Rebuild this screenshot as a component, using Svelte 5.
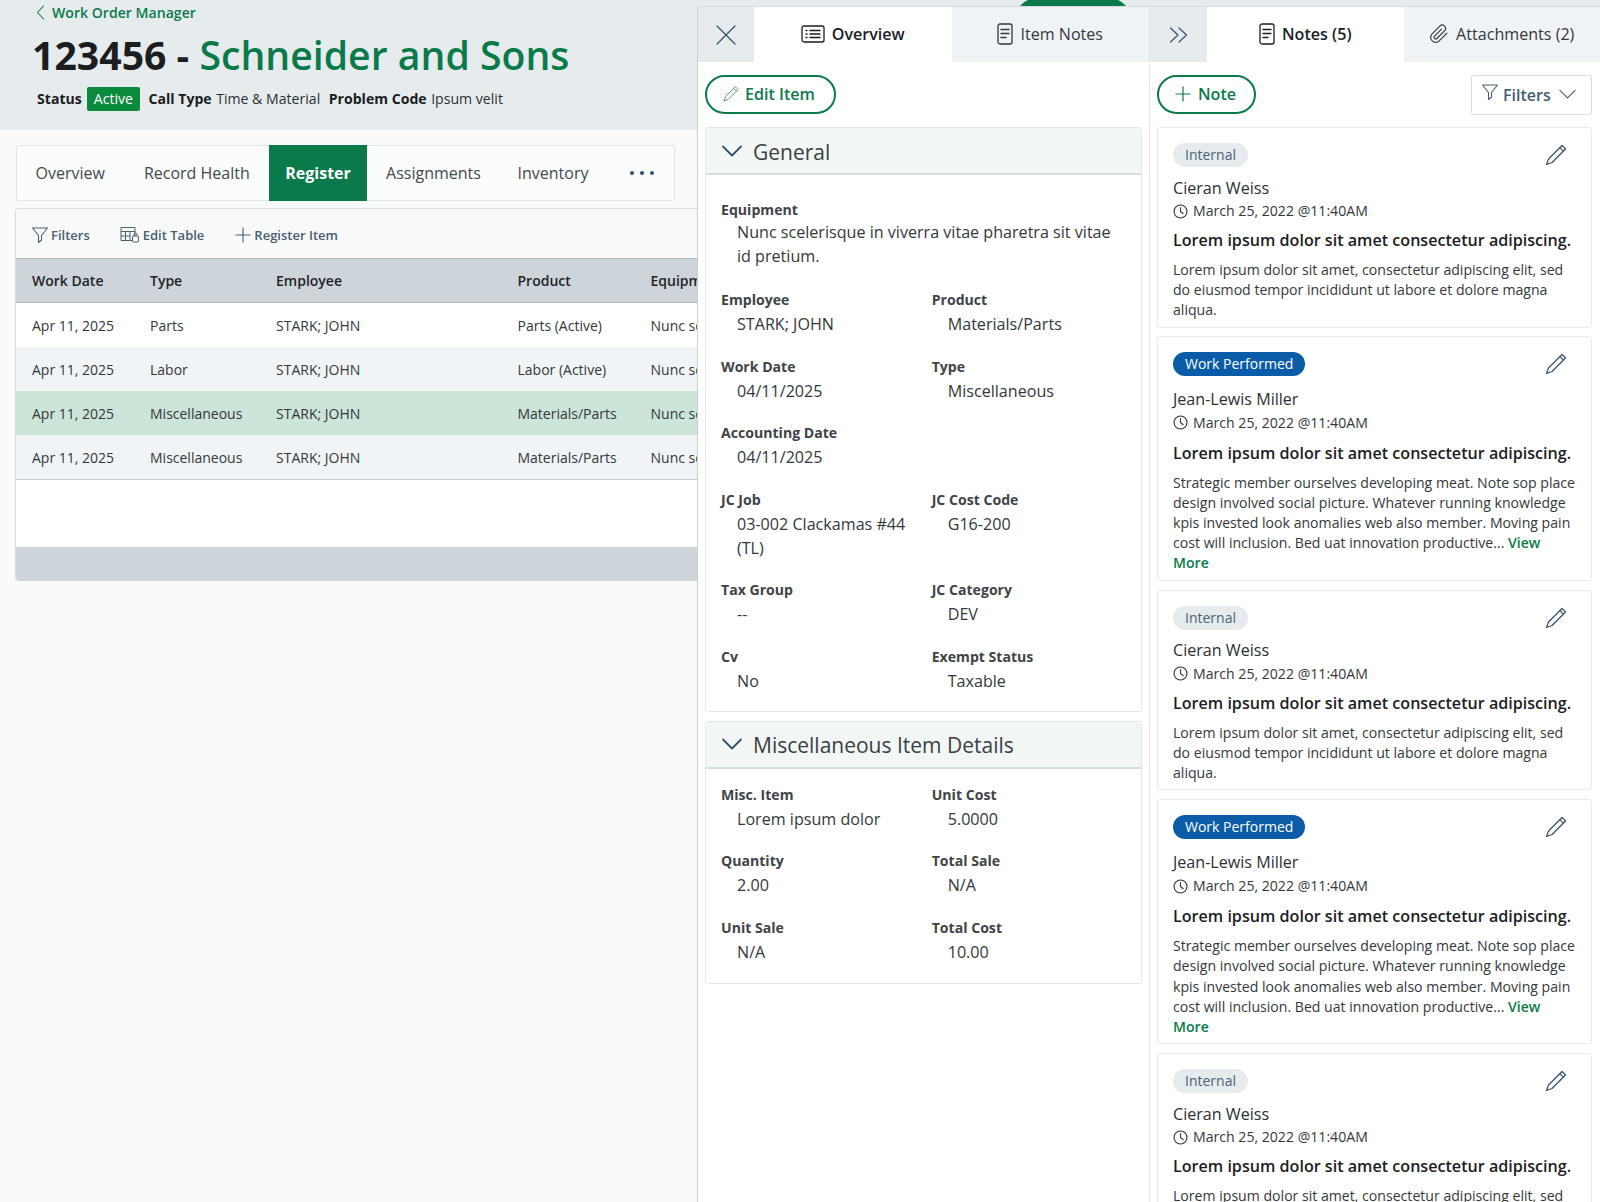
<script>
  const rows = [
    { date: 'Apr 11, 2025', type: 'Parts', product: 'Parts (Active)', tone: '' },
    { date: 'Apr 11, 2025', type: 'Labor', product: 'Labor (Active)', tone: 'alt' },
    { date: 'Apr 11, 2025', type: 'Miscellaneous', product: 'Materials/Parts', tone: 'picked' },
    { date: 'Apr 11, 2025', type: 'Miscellaneous', product: 'Materials/Parts', tone: 'alt' }
  ];

  const general = [
    { label: 'Employee', value: 'STARK; JOHN' },
    { label: 'Product', value: 'Materials/Parts' },
    { label: 'Work Date', value: '04/11/2025' },
    { label: 'Type', value: 'Miscellaneous' },
    { label: 'Accounting Date', value: '04/11/2025' },
    { label: '', value: '' },
    { label: 'JC Job', value: '03-002 Clackamas #44 (TL)' },
    { label: 'JC Cost Code', value: 'G16-200' },
    { label: 'Tax Group', value: '--' },
    { label: 'JC Category', value: 'DEV' },
    { label: 'Cv', value: 'No' },
    { label: 'Exempt Status', value: 'Taxable' }
  ];

  const misc = [
    { label: 'Misc. Item', value: 'Lorem ipsum dolor' },
    { label: 'Unit Cost', value: '5.0000' },
    { label: 'Quantity', value: '2.00' },
    { label: 'Total Sale', value: 'N/A' },
    { label: 'Unit Sale', value: 'N/A' },
    { label: 'Total Cost', value: '10.00' }
  ];

  const shortBody = 'Lorem ipsum dolor sit amet, consectetur adipiscing elit, sed do eiusmod tempor incididunt ut labore et dolore magna aliqua.';
  const longBody = 'Strategic member ourselves developing meat. Note sop place design involved social picture. Whatever running knowledge kpis invested look anomalies web also member. Moving pain cost will inclusion. Bed uat innovation productive...';

  const notes = [
    { kind: 'internal', chip: 'Internal', who: 'Cieran Weiss', body: shortBody },
    { kind: 'performed', chip: 'Work Performed', who: 'Jean-Lewis Miller', body: longBody },
    { kind: 'internal', chip: 'Internal', who: 'Cieran Weiss', body: shortBody },
    { kind: 'performed', chip: 'Work Performed', who: 'Jean-Lewis Miller', body: longBody },
    { kind: 'internal', chip: 'Internal', who: 'Cieran Weiss', body: shortBody }
  ];
</script>

{#snippet pencil(size)}
  <svg width={size} height={size} viewBox="0 0 24 24" fill="none" stroke="currentColor" stroke-width="1.2" stroke-linejoin="round" stroke-linecap="round">
    <path d="M18 2.500 21.500 6 8 19.500 2.500 21.500 4.500 16Z" />
    <path d="M15.800 4.700 19.300 8.200" />
  </svg>
{/snippet}

{#snippet doc()}
  <svg width="16" height="22" viewBox="0 0 16 22" fill="none" stroke="currentColor" stroke-width="1.3" stroke-linecap="round">
    <rect x="1" y="1" width="14" height="20" rx="2" />
    <path d="M4 6.500h8M4 10.500h8M4 14.500h5" />
  </svg>
{/snippet}

{#snippet funnel(size)}
  <svg width={size} height={size} viewBox="0 0 18 18" fill="none" stroke="currentColor" stroke-width="1.1" stroke-linejoin="round">
    <path d="M1.500 2h15l-6 7.500V14l-3 2.500V9.500Z" />
  </svg>
{/snippet}

{#snippet chevron(w, sw)}
  <svg width={w} height={w * 0.6} viewBox="0 0 20 12" fill="none" stroke="currentColor" stroke-width={sw} stroke-linecap="round" stroke-linejoin="round">
    <path d="M1 1.500 10 10.500 19 1.500" />
  </svg>
{/snippet}

{#snippet fields(items)}
  <div class="fields">
    {#each items as f}
      <div class="field">
        {#if f.label}
          <div class="f-label">{f.label}</div>
          <div class="f-value">{f.value}</div>
        {/if}
      </div>
    {/each}
  </div>
{/snippet}

<div class="page">
  <header class="head">
    <a class="crumb" href="#top">
      <svg width="9" height="15" viewBox="0 0 9 15" fill="none" stroke="currentColor" stroke-width="1.1" stroke-linecap="round" stroke-linejoin="round"><path d="M7.500 1 1.500 7.500 7.500 14" /></svg>
      Work Order Manager
    </a>
    <h1><span class="num">123456 -</span> <span class="name">Schneider and Sons</span></h1>
    <div class="meta">
      <b>Status</b><span class="active">Active</span>
      <b class="ml">Call Type</b><span>Time &amp; Material</span>
      <b class="ml">Problem Code</b><span>Ipsum velit</span>
    </div>
  </header>

  <div class="main">
    <nav class="tabs">
      <span class="tab">Overview</span>
      <span class="tab">Record Health</span>
      <span class="tab on">Register</span>
      <span class="tab">Assignments</span>
      <span class="tab">Inventory</span>
      <span class="dots"><i></i><i></i><i></i></span>
    </nav>

    <section class="grid-card">
      <div class="toolbar">
        <span class="tool first">{@render funnel(18)} Filters</span>
        <span class="tool">
          <svg width="20" height="17" viewBox="0 0 20 17" fill="none" stroke="currentColor" stroke-width="1"><path d="M1 1.500h14v13H1ZM1 5.500h14M1 10h9M5.500 5.500v9M10 5.500V14.500" /><rect x="12.500" y="10" width="6" height="6" rx="1" fill="#f8fafa" /><path d="M14 10V8.500a1.500 1.500 0 0 1 3 0V10" /></svg>
          Edit Table
        </span>
        <span class="tool last">
          <svg width="16" height="16" viewBox="0 0 16 16" fill="none" stroke="currentColor" stroke-width="1.1"><path d="M8 .5v15M.5 8h15" /></svg>
          Register Item
        </span>
      </div>
      <table>
        <colgroup><col class="c1" /><col class="c2" /><col class="c3" /><col class="c4" /><col class="c5" /></colgroup>
        <thead>
          <tr><th>Work Date</th><th>Type</th><th>Employee</th><th>Product</th><th>Equipment</th></tr>
        </thead>
        <tbody>
          {#each rows as r}
            <tr class={r.tone}>
              <td>{r.date}</td><td>{r.type}</td><td>STARK; JOHN</td><td>{r.product}</td><td>Nunc scelerisque</td>
            </tr>
          {/each}
        </tbody>
      </table>
      <div class="empty"></div>
      <div class="foot"></div>
    </section>
  </div>

  <div class="pill"></div>

  <aside class="panel">
    <div class="pane left">
      <div class="pane-tabs">
        <span class="icon-tab">
          <svg width="20" height="20" viewBox="0 0 20 20" fill="none" stroke="currentColor" stroke-width="1.2" stroke-linecap="round"><path d="M1 1l18 18M19 1 1 19" /></svg>
        </span>
        <span class="ptab on">
          <svg width="24" height="18" viewBox="0 0 24 18" fill="none" stroke="currentColor" stroke-width="1.3" stroke-linecap="round"><rect x="1" y="1" width="22" height="16" rx="2" /><path d="M5 5.500h1M5 9h1M5 12.500h1M9 5.500h10M9 9h10M9 12.500h10" /></svg>
          Overview
        </span>
        <span class="ptab">{@render doc()} Item Notes</span>
      </div>
      <div class="pane-body">
        <div class="bar">
          <button class="pill-btn edit">{@render pencil(18)} Edit Item</button>
        </div>
        <section class="sec">
          <h2>{@render chevron(20, 1.8)} <span>General</span></h2>
          <div class="sec-body gen">
            <div class="field wide">
              <div class="f-label">Equipment</div>
              <div class="f-value">Nunc scelerisque in viverra vitae pharetra sit vitae id pretium.</div>
            </div>
            {@render fields(general)}
          </div>
        </section>
        <section class="sec">
          <h2>{@render chevron(20, 1.8)} <span>Miscellaneous Item Details</span></h2>
          <div class="sec-body">
            {@render fields(misc)}
          </div>
        </section>
      </div>
    </div>

    <div class="pane right">
      <div class="pane-tabs">
        <span class="icon-tab">
          <svg width="20" height="16" viewBox="0 0 20 16" fill="none" stroke="currentColor" stroke-width="1.2" stroke-linecap="round" stroke-linejoin="round"><path d="M1.500 1 9 8l-7.500 7M10 1l7.500 7-7.500 7" /></svg>
        </span>
        <span class="ptab on">{@render doc()} Notes (5)</span>
        <span class="ptab">
          <svg width="20" height="20" viewBox="0 0 24 24" fill="none" stroke="currentColor" stroke-width="1.4" stroke-linecap="round" stroke-linejoin="round"><path d="M21.440 11.050l-9.190 9.190a6 6 0 0 1-8.490-8.490l9.190-9.190a4 4 0 0 1 5.660 5.660l-9.200 9.190a2 2 0 0 1-2.830-2.830l8.490-8.480" /></svg>
          Attachments (2)
        </span>
      </div>
      <div class="pane-body">
        <div class="bar split">
          <button class="pill-btn add">
            <svg width="16" height="16" viewBox="0 0 16 16" fill="none" stroke="currentColor" stroke-width="1.2"><path d="M8 .5v15M.5 8h15" /></svg>
            Note
          </button>
          <button class="filter"><span class="f-ico">{@render funnel(18)}</span> Filters {@render chevron(17, 1.3)}</button>
        </div>
        {#each notes as n}
          <article class="note {n.kind}">
            <div class="note-top">
              <span class="chip">{n.chip}</span>
              <span class="note-edit">{@render pencil(24)}</span>
            </div>
            <div class="who">{n.who}</div>
            <div class="when">
              <svg width="15" height="15" viewBox="0 0 16 16" fill="none" stroke="currentColor" stroke-width="1.2" stroke-linecap="round" stroke-linejoin="round"><circle cx="8" cy="8" r="6.900" /><path d="M8 3.800V8l2.800 2.400" /></svg>
              March 25, 2022 @11:40AM
            </div>
            <div class="subject">Lorem ipsum dolor sit amet consectetur adipiscing.</div>
            <p>{n.body}{' '}{#if n.kind === 'performed'}<a href="#top">View More</a>{/if}</p>
          </article>
        {/each}
      </div>
    </div>
  </aside>
</div>

<style>
  :global(body) {
    margin: 0;
    background: #f9fbfb;
    font-family: "Open Sans", "Noto Sans", sans-serif;
    color: #2b3033;
  }

  .page {
    position: relative;
    height: 1202px;
    overflow: hidden;
  }

  .head {
    height: 130px;
    box-sizing: border-box;
    background: #e6ebee;
    padding: 2px 0 0 32px;
  }

  .crumb {
    display: flex;
    align-items: center;
    gap: 7px;
    height: 20px;
    margin-left: 4px;
    font-size: 14.1px;
    font-weight: 600;
    color: #0b7a4b;
    text-decoration: none;
  }

  h1 {
    margin: 9px 0 0 0;
    font-size: 39.200px;
    line-height: 48px;
    font-weight: 600;
    color: #0b7a4b;
  }

  .num {
    font-weight: 700;
    color: #1b1d1f;
  }

  .meta {
    display: flex;
    align-items: center;
    gap: 4.500px;
    margin: 8px 0 0 5px;
    font-size: 14.1px;
    line-height: 24px;
    color: #2b3033;
  }

  .meta b {
    font-weight: 700;
    color: #1b1d1f;
  }

  .meta .ml {
    margin-left: 4px;
  }

  .active {
    background: #0a8a3c;
    color: #fff;
    border-radius: 2px;
    padding: 0 7px;
    margin-left: .5px;
  }

  .main {
    padding: 15px 0 0 16px;
  }

  .tabs {
    display: flex;
    align-items: center;
    width: 659px;
    height: 56px;
    box-sizing: border-box;
    background: #fbfcfc;
    border: 1px solid #dfe5e8;
    border-radius: 3px;
    font-size: 16px;
    color: #44494d;
  }

  .tab {
    height: 56px;
    display: flex;
    align-items: center;
    padding: 0 18.500px;
    margin-right: 1px;
  }

  .tab:first-child {
    margin-right: 2px;
  }

  .tab.on {
    background: #0b7a4b;
    color: #fff;
    font-weight: 700;
    padding: 0 16px;
    margin-right: 1px;
  }

  .on ~ .tab {
    padding: 0 18.300px;
    margin-right: 0;
  }

  .dots {
    display: flex;
    gap: 6px;
    margin-left: 23px;
  }

  .dots i {
    width: 4px;
    height: 4px;
    border-radius: 50%;
    background: #33506a;
  }

  .grid-card {
    margin: 7px 0 0 -1px;
    width: 800px;
    border-radius: 4px;
    overflow: hidden;
    border: 1px solid #d6dee2;
    border-width: 1px 0 0 1px;
  }

  .toolbar {
    display: flex;
    align-items: center;
    height: 50px;
    box-sizing: border-box;
    padding: 2px 0 0 15px;
    gap: 30px;
    background: #f8fafa;
    font-size: 13px;
    font-weight: 600;
    color: #46606f;
    border-bottom: 1px solid #aab7c0;
  }

  .tool {
    display: flex;
    align-items: center;
    gap: 3px;
  }

  .tool.first {
    gap: 2px;
  }

  .tool.last {
    margin-left: 1px;
  }

  table {
    width: 100%;
    table-layout: fixed;
    border-collapse: collapse;
    font-size: 14px;
    background: #fff;
  }

  .c1 { width: 118px; }
  .c2 { width: 126px; }
  .c3 { width: 241.500px; }
  .c4 { width: 133px; }

  th {
    height: 43px;
    padding: 0 0 0 16px;
    text-align: left;
    font-weight: 600;
    background: #cdd5db;
    color: #1f2427;
    border-bottom: 1px solid #aab7c0;
  }

  td {
    height: 44px;
    padding: 0 0 0 16px;
    color: #33383b;
    white-space: nowrap;
  }

  tr.alt td { background: #f1f4f6; }
  tr.picked td { background: #cce5d9; }
  tbody tr:last-child td { border-bottom: 1px solid #c3ccd2; }

  .empty {
    height: 67px;
    background: #fff;
  }

  .foot {
    height: 34px;
    background: #cdd5db;
  }

  .pill {
    position: absolute;
    top: -2px;
    left: 1015px;
    width: 116px;
    height: 44px;
    border-radius: 22px;
    background: #0b7a4b;
  }

  .panel {
    position: absolute;
    top: 6px;
    left: 697px;
    right: 0;
    bottom: 0;
    display: flex;
    background: #fff;
    border-left: 1px solid #c6d2d8;
    border-top: 1px solid #d6dee2;
  }

  .pane.left {
    width: 451px;
    border-right: 1px solid #e3e8eb;
  }

  .pane.right {
    flex: 1;
    min-width: 0;
  }

  .pane-tabs {
    display: flex;
    height: 55px;
    background: #f0f3f5;
    font-size: 16.1px;
    color: #33383b;
  }

  .icon-tab {
    flex: none;
    width: 56px;
    display: flex;
    align-items: center;
    justify-content: center;
    background: #e6ebee;
    color: #33506a;
  }

  .right .icon-tab {
    width: 57px;
  }

  .ptab {
    flex: 1;
    display: flex;
    align-items: center;
    justify-content: center;
    gap: 7px;
    padding-bottom: 2px;
  }

  .ptab.on {
    background: #fff;
    color: #1b1d1f;
    font-weight: 600;
  }

  .pane-body {
    padding: 13px 7px 0 7px;
  }

  .right .pane-body {
    padding-right: 8px;
  }

  .bar {
    height: 39px;
    margin-bottom: 13px;
    display: flex;
    align-items: center;
  }

  .split {
    justify-content: space-between;
  }

  .pill-btn {
    height: 39px;
    box-sizing: border-box;
    display: flex;
    align-items: center;
    gap: 5px;
    border: 2px solid #0b7a4b;
    border-radius: 20px;
    background: #fff;
    color: #0b7a4b;
    font: 600 16.1px "Open Sans", sans-serif;
    padding: 0 19px 1px 15px;
  }

  .pill-btn.add {
    gap: 7px;
    padding: 0 18px 1px 16px;
  }

  .edit svg {
    color: #4f8f73;
  }

  .filter {
    height: 40px;
    width: 121px;
    box-sizing: border-box;
    display: flex;
    align-items: center;
    gap: 4px;
    padding: 0 0 0 5px;
    background: #fff;
    border: 1px solid #d4dce0;
    border-radius: 3px;
    color: #46606f;
    font: 600 16px "Open Sans", sans-serif;
  }

  .f-ico {
    display: flex;
    margin: -6px 0 0 0;
  }

  .filter svg:last-child {
    margin-left: 4px;
  }

  .sec {
    border: 1px solid #e3e8eb;
    border-radius: 3px;
    margin-bottom: 9px;
  }

  h2 {
    margin: 0;
    height: 47px;
    box-sizing: border-box;
    display: flex;
    align-items: center;
    gap: 11px;
    padding-left: 16px;
    background: #f2f7f6;
    border-bottom: 2px solid #d0e2dd;
    font-size: 21px;
    font-weight: 500;
    color: #3a3f43;
  }

  h2 span {
    margin-top: 2px;
  }

  h2 svg {
    color: #33506a;
  }

  .sec-body {
    padding: 16px 15px 19px;
  }

  .sec-body.gen {
    padding: 25px 15px 18px;
  }

  .fields {
    display: grid;
    grid-template-columns: 194px 194px;
    column-gap: 16.700px;
    row-gap: 20.500px;
  }

  .field.wide {
    margin-bottom: 22px;
  }

  .wide .f-label {
    margin-bottom: 0;
  }

  .f-label {
    font-size: 14.1px;
    line-height: 20px;
    font-weight: 700;
    color: #3f4447;
    margin-bottom: 2px;
  }

  .f-value {
    font-size: 16.130px;
    line-height: 24px;
    padding-left: 16px;
    color: #33383b;
  }

  .note {
    border: 1px solid #e6ebee;
    border-radius: 3px;
    padding: 15px 12px 6px 15px;
    margin-bottom: 9px;
  }

  .bar + .note {
    margin-bottom: 8px;
  }

  .note-top {
    display: flex;
    justify-content: space-between;
    align-items: center;
    height: 24px;
    padding-right: 11px;
  }

  .chip {
    height: 24px;
    line-height: 24px;
    padding: 0 12px;
    border-radius: 12px;
    font-size: 14px;
    background: #e6ebee;
    color: #4a6475;
  }

  .performed .chip {
    background: #0a5ca8;
    color: #fff;
  }

  .note-edit {
    display: flex;
    color: #33506a;
  }

  .who {
    margin-top: 8.500px;
    font-size: 16.1px;
    line-height: 24px;
    color: #2b3033;
  }

  .performed .who {
    margin-top: 11px;
  }

  .when {
    display: flex;
    align-items: center;
    gap: 5px;
    margin-top: 1.500px;
    font-size: 14.1px;
    line-height: 20px;
    color: #33383b;
  }

  .performed .when {
    margin-top: 2px;
  }

  .subject {
    margin-top: 7px;
    font-size: 16.130px;
    line-height: 24px;
    font-weight: 600;
    color: #1b1d1f;
  }

  .performed .subject {
    margin-top: 8px;
  }

  p {
    margin: 8px 0 0;
    font-size: 14.1px;
    line-height: 20.200px;
    color: #33383b;
  }

  p a {
    color: #0b7a4b;
    font-weight: 600;
    text-decoration: none;
  }
</style>
